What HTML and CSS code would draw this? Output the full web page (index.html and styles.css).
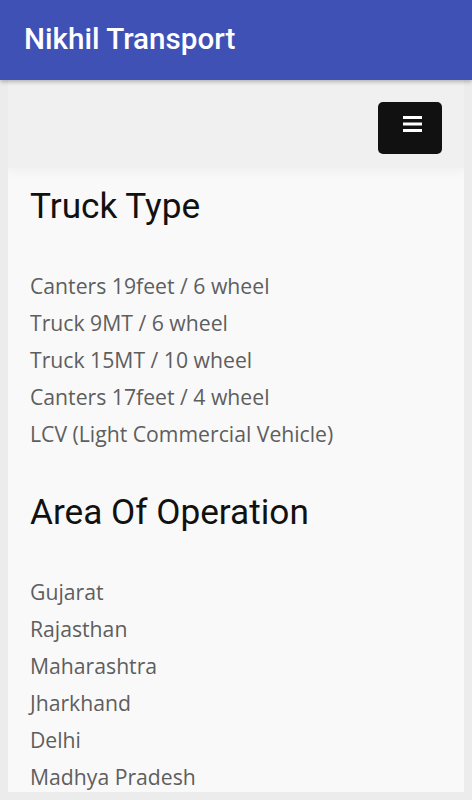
FILE: index.html
```html
<!DOCTYPE html>
<html lang="en">
<head>
    <meta charset="UTF-8">
    <meta name="viewport" content="width=device-width, initial-scale=1.0">
    <title>Nikhil Transport</title>
    <link rel="stylesheet" href="styles.css">
</head>
<body>
    <header class="topbar">
        <h1 class="brand">Nikhil Transport</h1>
    </header>
    <div class="page">
        <nav class="menu-bar">
            <button class="menu-toggle" type="button" aria-label="Menu">
                <svg width="19" height="17" viewBox="0 0 19 17">
                    <rect x="0" y="0" width="19" height="3" fill="#fff"/>
                    <rect x="0" y="6.5" width="19" height="3" fill="#fff"/>
                    <rect x="0" y="13" width="19" height="3" fill="#fff"/>
                </svg>
            </button>
        </nav>
        <div class="content">
            <h2 class="section-title">Truck Type</h2>
            <ul class="list">
                <li>Canters 19feet / 6 wheel</li>
                <li>Truck 9MT / 6 wheel</li>
                <li>Truck 15MT / 10 wheel</li>
                <li>Canters 17feet / 4 wheel</li>
                <li>LCV (Light Commercial Vehicle)</li>
            </ul>
            <h2 class="section-title">Area Of Operation</h2>
            <ul class="list">
                <li>Gujarat</li>
                <li>Rajasthan</li>
                <li>Maharashtra</li>
                <li>Jharkhand</li>
                <li>Delhi</li>
                <li>Madhya Pradesh</li>
            </ul>
        </div>
    </div>
</body>
</html>
```

FILE: styles.css
```css
html, body {
    margin: 0;
    padding: 0;
    background: #ececec;
    height: 100%;
    overflow: hidden;
}
.topbar {
    height: 80px;
    background: #3f51b5;
    padding-left: 24px;
    display: flex;
    align-items: center;
    box-shadow: 0 2px 4px rgba(0, 0, 0, 0.25);
    position: relative;
    z-index: 2;
}
.brand {
    margin: 0;
    font-family: Roboto, "Liberation Sans", sans-serif;
    font-weight: 500;
    font-size: 29.6px;
    color: #fff;
    line-height: 1;
}
.page {
    margin: 0 8px;
    height: 712px;
    overflow: hidden;
    background: #f9f9f9;
}
.menu-bar {
    height: 88px;
    background: #f0f0f0;
    display: flex;
    justify-content: flex-end;
    align-items: flex-start;
    padding: 22px 22px 0 0;
    box-sizing: border-box;
    box-shadow: 0 4px 10px rgba(0, 0, 0, 0.04);
    position: relative;
}
.menu-toggle {
    width: 64px;
    height: 52px;
    background: #111;
    border: none;
    border-radius: 5px;
    display: flex;
    align-items: center;
    justify-content: center;
    padding: 0 0 8px 4px;
}
.content {
    padding: 18px 22px 0 22px;
}
.section-title {
    margin: 0;
    font-family: Roboto, "Liberation Sans", sans-serif;
    font-weight: 400;
    font-size: 35.2px;
    line-height: 40px;
    color: #111;
}
.list {
    list-style: none;
    margin: 41px 0 40px 0;
    padding: 0;
}
.list li {
    font-family: "Open Sans", "Liberation Sans", sans-serif;
    font-size: 21.2px;
    line-height: 37px;
    color: #5e5e5e;
}
```
